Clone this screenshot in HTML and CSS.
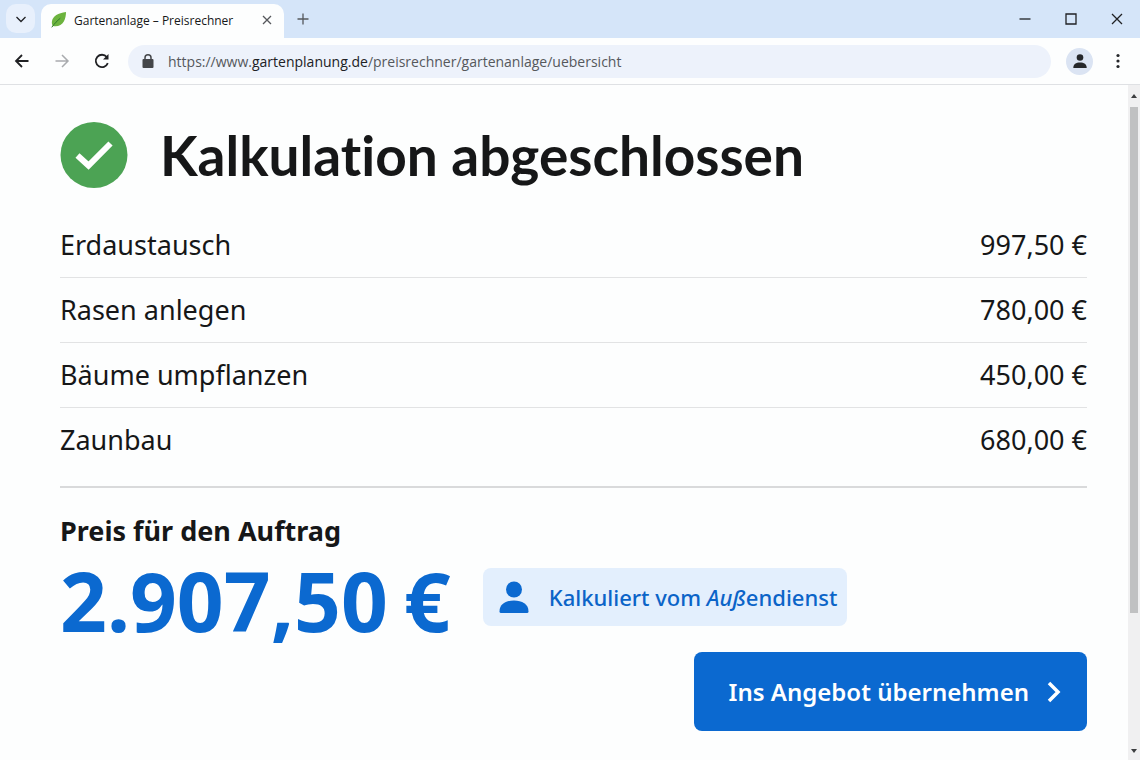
FILE: index.html
```html
<!DOCTYPE html>
<html lang="de">
<head>
    <meta charset="UTF-8">
    <meta name="viewport" content="width=device-width, initial-scale=1.0">
    <title>Gartenanlage – Preisrechner</title>
    <link rel="stylesheet" href="styles.css">
</head>
<body>
    <header class="browser">
        <div class="tabbar">
            <button class="tab-search" aria-label="Tabs durchsuchen">
                <svg width="12" height="12" viewBox="0 0 12 12"><path d="M1.500 4L6 8.500 10.500 4"/></svg>
            </button>
            <div class="tab">
                <svg class="leaf" width="18" height="18" viewBox="0 0 18 18">
                    <path d="M16 1C8 2 3 5 2 10c-.4 2 0 3.500.8 5 5 .8 9-.6 11-4.500C15.500 7.500 16 4 16 1z" fill="#6cb33e"/>
                    <path d="M2 16C5 12 7 10 10 7.500" fill="none" stroke="#2f7a2b" stroke-width="1" stroke-linecap="round"/>
                </svg>
                <span class="tab-title">Gartenanlage – Preisrechner</span>
                <button class="tab-close" aria-label="Tab schließen">
                    <svg width="12" height="12" viewBox="0 0 12 12"><path d="M2 2l8 8M10 2l-8 8"/></svg>
                </button>
            </div>
            <button class="tab-new" aria-label="Neuer Tab">
                <svg width="12" height="12" viewBox="0 0 12 12"><path d="M6 .5v11M.5 6h11"/></svg>
            </button>
            <div class="window-buttons">
                <button aria-label="Minimieren"><svg width="12" height="12" viewBox="0 0 12 12"><path d="M.5 6h11"/></svg></button>
                <button aria-label="Maximieren"><svg width="12" height="12" viewBox="0 0 12 12"><path d="M1 1h10v10H1z"/></svg></button>
                <button aria-label="Schließen"><svg width="12" height="12" viewBox="0 0 12 12"><path d="M1 1l10 10M11 1L1 11"/></svg></button>
            </div>
        </div>
        <div class="toolbar">
            <button class="nav-btn" aria-label="Zurück">
                <svg width="16" height="16" viewBox="0 0 16 16"><path d="M14.500 8H2M8 2L2 8l6 6"/></svg>
            </button>
            <button class="nav-btn disabled" aria-label="Vorwärts">
                <svg width="16" height="16" viewBox="0 0 16 16"><path d="M1.500 8H14M8 2l6 6-6 6"/></svg>
            </button>
            <button class="nav-btn" aria-label="Neu laden">
                <svg width="16" height="16" viewBox="0 0 16 16"><path d="M13.800 10.200A6.200 6.200 0 1 1 12.800 4"/><path d="M14.500 1v5.500H9z" fill="#202124" stroke="none"/></svg>
            </button>
            <div class="address">
                <svg width="12" height="15" viewBox="0 0 12 15">
                    <rect x="0.500" y="5" width="11" height="9" rx="1" fill="#444649"/>
                    <path d="M3 6V3.800a3 3 0 0 1 6 0V6" fill="none" stroke="#444649" stroke-width="1.500"/>
                </svg>
                <span class="url">https://www.<b>gartenplanung.de</b>/preisrechner/gartenanlage/uebersicht</span>
            </div>
            <button class="profile" aria-label="Profil">
                <svg width="14" height="14" viewBox="0 0 14 14"><circle cx="7" cy="3.500" r="3.300"/><path d="M.3 14C.3 10 3 8.500 7 8.500s6.700 1.500 6.700 5.500z"/></svg>
            </button>
            <button class="menu" aria-label="Menü">
                <svg width="4" height="16" viewBox="0 0 4 16"><circle cx="2" cy="2.500" r="1.600"/><circle cx="2" cy="8" r="1.600"/><circle cx="2" cy="13.500" r="1.600"/></svg>
            </button>
        </div>
    </header>

    <div class="page">
        <main>
            <div class="headline">
                <svg class="check" width="68" height="66" viewBox="0 0 68 66">
                    <ellipse cx="34" cy="33" rx="33.500" ry="33" fill="#4ca354"/>
                    <path d="M17.500 33.500L28.500 43.500 50.500 21.500" fill="none" stroke="#fff" stroke-width="6"/>
                </svg>
                <h1>Kalkulation abgeschlossen</h1>
            </div>

            <table class="items">
                <tbody>
                    <tr><th scope="row">Erdaustausch</th><td>997,50 €</td></tr>
                    <tr><th scope="row">Rasen anlegen</th><td>780,00 €</td></tr>
                    <tr><th scope="row">Bäume umpflanzen</th><td>450,00 €</td></tr>
                    <tr><th scope="row">Zaunbau</th><td>680,00 €</td></tr>
                </tbody>
            </table>

            <h2>Preis für den Auftrag</h2>
            <div class="total">
                <div class="price"><span>2.907,50</span><span>€</span></div>
                <div class="badge">
                    <svg width="30" height="32" viewBox="0 0 30 32"><circle cx="15" cy="8.500" r="8"/><path d="M.5 30.500C.5 23 7 19.500 15 19.500s14.500 3.500 14.500 11q0 1.500-1.500 1.500H2q-1.500 0-1.500-1.500z"/></svg>
                    <span>Kalkuliert vom <em>Auß</em>endienst</span>
                </div>
            </div>

            <div class="actions">
                <button class="submit">
                    Ins Angebot übernehmen
                    <svg width="14" height="22" viewBox="0 0 14 22"><path d="M2 2l9 9-9 9"/></svg>
                </button>
            </div>
        </main>

        <div class="scrollbar">
            <svg width="8" height="6" viewBox="0 0 8 6"><path d="M1 5l3-4 3 4z"/></svg>
            <div class="track"><div class="thumb"></div></div>
            <svg width="8" height="6" viewBox="0 0 8 6"><path d="M1 1l3 4 3-4z"/></svg>
        </div>
    </div>
</body>
</html>
```
FILE: styles.css
```css
* {
    margin: 0;
    padding: 0;
    box-sizing: border-box;
}

body {
    font-family: "Noto Sans", "Open Sans", sans-serif;
    color: #161718;
    background: #fdfefe;
    display: flex;
    flex-direction: column;
    min-height: 100vh;
}

button {
    font: inherit;
    border: none;
    background: none;
    cursor: pointer;
    display: flex;
    align-items: center;
    justify-content: center;
}

svg {
    display: block;
    flex: none;
}

/* browser bar */
.browser {
    font-family: "Open Sans", "Noto Sans", sans-serif;
}

.tabbar {
    display: flex;
    height: 38px;
    background: #d5e5f9;
    padding-left: 6px;
}

.tabbar button svg,
.nav-btn svg {
    fill: none;
    stroke: #202124;
    stroke-width: 1.3;
}

.tabbar .tab-search {
    width: 29px;
    height: 29px;
    margin-top: 4px;
    border-radius: 10px;
    background: #e8f0fc;
}

.tab-search svg {
    stroke-width: 1.6;
}

.tab {
    display: flex;
    align-items: center;
    width: 243px;
    height: 34px;
    margin: 4px 0 0 6px;
    padding: 0 10px 2px 9px;
    border-radius: 10px 10px 0 0;
    background: #fdfefe;
}

.tab-title {
    flex: 1;
    margin-left: 6px;
    font-size: 12px;
    white-space: nowrap;
}

.tab-close,
.tab-new {
    width: 14px;
}

.tab-new {
    margin-left: 12px;
}

.tabbar .tab-close svg,
.tabbar .tab-new svg {
    stroke: #55585c;
}

.window-buttons {
    display: flex;
    margin-left: auto;
}

.window-buttons button {
    width: 46px;
}

.toolbar {
    display: flex;
    align-items: center;
    height: 47px;
    padding: 0 12px 0 14px;
    background: #fdfefe;
    border-bottom: 1px solid #dfe1e4;
}

.nav-btn {
    width: 16px;
    height: 28px;
    margin-right: 24px;
}

.nav-btn svg {
    stroke-width: 1.8;
}

.nav-btn.disabled svg {
    stroke: #a9abae;
    stroke-width: 1.5;
}

.address {
    display: flex;
    align-items: center;
    flex: 1;
    height: 33px;
    margin-left: -6px;
    padding-left: 14px;
    border-radius: 17px;
    background: #edf2fb;
}

.url {
    margin-left: 14px;
    font-size: 14px;
    color: #55585c;
}

.url b {
    font-weight: normal;
    color: #202124;
}

.profile {
    width: 27px;
    height: 27px;
    margin: 0 15px;
    border-radius: 50%;
    background: #dbe4f3;
}

.menu {
    width: 20px;
}

.profile svg,
.menu svg {
    fill: #25272a;
}

/* page */
.page {
    display: flex;
    flex: 1;
}

main {
    flex: 1;
    padding: 37px 41px 0 60px;
}

.headline {
    display: flex;
    align-items: center;
    gap: 32px;
    height: 66px;
}

h1 {
    font-family: Lato, "Open Sans", sans-serif;
    font-size: 55px;
    line-height: 66px;
    font-weight: 700;
    font-variant-ligatures: none;
    white-space: nowrap;
}

.items {
    width: 100%;
    margin-top: 25px;
    border-collapse: collapse;
    border-bottom: 2px solid #d9dadb;
    font-size: 27px;
    line-height: 38px;
}

.items th,
.items td {
    padding: 13px 0;
    font-weight: normal;
    text-align: left;
    border-bottom: 1px solid #e2e3e4;
}

.items td {
    text-align: right;
}

.items tr:last-child > * {
    padding-bottom: 27px;
    border-bottom: none;
}

h2 {
    margin-top: 23px;
    font-size: 27px;
    line-height: 40px;
    font-weight: 700;
}

.total {
    display: flex;
    gap: 32px;
    height: 90px;
}

.price {
    display: flex;
    gap: 16px;
    margin-top: 4px;
    font-size: 82px;
    line-height: 90px;
    font-weight: 700;
    color: #0b69d0;
    white-space: nowrap;
}

.badge {
    display: flex;
    align-items: center;
    gap: 20px;
    height: 58px;
    margin-top: 17px;
    padding: 0 10px 0 16px;
    border-radius: 8px;
    background: #e3effd;
    color: #0b64c8;
    font-size: 22px;
    font-weight: 500;
    white-space: nowrap;
}

.badge svg {
    fill: #0b69d0;
}

.actions {
    display: flex;
    justify-content: flex-end;
    margin-top: 11px;
}

.submit {
    gap: 18px;
    height: 79px;
    padding: 0 26px 0 35px;
    border-radius: 8px;
    background: #0b69d0;
    color: #fff;
    font-size: 24px;
    font-weight: 600;
    white-space: nowrap;
}

.submit svg {
    fill: none;
    stroke: #fff;
    stroke-width: 3.5;
}

.scrollbar {
    display: flex;
    flex-direction: column;
    align-items: center;
    width: 12px;
    padding: 8px 0 6px;
    background: #f0f0f1;
}

.scrollbar svg {
    fill: #3c3e40;
}

.track {
    flex: 1;
    width: 8px;
    margin: 8px 0;
}

.thumb {
    height: 80%;
    background: #c0c1c2;
}
```
